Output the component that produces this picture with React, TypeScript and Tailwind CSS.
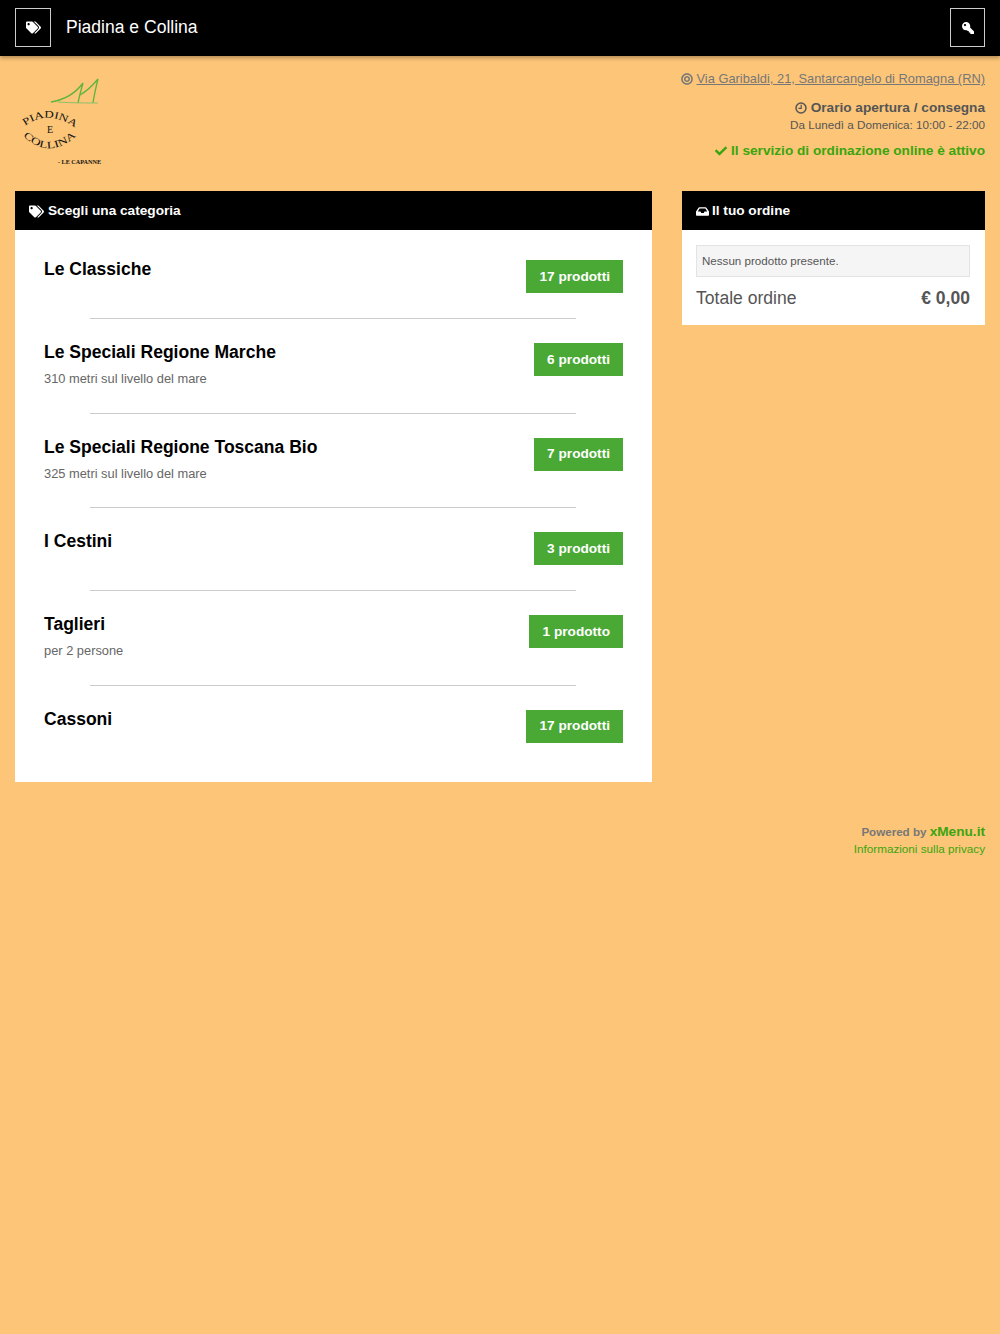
import { FaTags, FaKey, FaCheck, FaInbox, FaBullseye } from "react-icons/fa";

const categories = [
  { name: "Le Classiche", note: "", count: "17 prodotti" },
  { name: "Le Speciali Regione Marche", note: "310 metri sul livello del mare", count: "6 prodotti" },
  { name: "Le Speciali Regione Toscana Bio", note: "325 metri sul livello del mare", count: "7 prodotti" },
  { name: "I Cestini", note: "", count: "3 prodotti" },
  { name: "Taglieri", note: "per 2 persone", count: "1 prodotto" },
  { name: "Cassoni", note: "", count: "17 prodotti" },
];

function Logo() {
  return (
    <svg width="90" height="90" viewBox="0 0 90 90" className="block">
      <path d="M34 26 C46 24 58 18 66 7 C64 14 62 22 61 27" fill="none" stroke="#5db53c" strokeWidth="1.3" />
      <path d="M63 19 C70 15 76 9 81 3 C79 11 77 20 76 27" fill="none" stroke="#5db53c" strokeWidth="1.3" />
      <path d="M41 26 C55 27 70 27 81 27" fill="none" stroke="#8cc06c" strokeWidth="1" />
      <defs>
        <path id="arcTop" d="M8 50 Q31 33 57 51" />
        <path id="arcBottom" d="M6 60 Q31 84 58 61" />
      </defs>
      <text fontFamily="'Liberation Serif', serif" fontSize="10" fill="#111">
        <textPath href="#arcTop" textLength="54" lengthAdjust="spacingAndGlyphs">PIADINA</textPath>
      </text>
      <text x="30" y="57" fontFamily="'Liberation Serif', serif" fontSize="10" fill="#111">E</text>
      <text fontFamily="'Liberation Serif', serif" fontSize="10" fill="#111">
        <textPath href="#arcBottom" textLength="60" lengthAdjust="spacingAndGlyphs">COLLINA</textPath>
      </text>
      <text x="41" y="88" textLength="43" lengthAdjust="spacingAndGlyphs" fontFamily="'Liberation Serif', serif" fontSize="6" fontWeight="700" fill="#111">- LE CAPANNE</text>
    </svg>
  );
}

function ClockIcon() {
  return (
    <svg width="12" height="12" viewBox="0 0 12 12" fill="none" stroke="currentColor">
      <circle cx="6" cy="6" r="5" strokeWidth="1.5" />
      <path d="M6.2 2.8 V6.4 H3.4" strokeWidth="1.2" />
    </svg>
  );
}

export default function App() {
  return (
    <div className="min-h-[1334px] bg-[#fcc578] font-['Liberation_Sans',Arial,sans-serif] text-[#555]">
      {/* top bar */}
      <header className="flex h-14 items-start justify-between bg-black px-[15px] pt-2 shadow-[0_2px_4px_rgba(0,0,0,0.3)]">
        <div className="flex items-start">
          <button className="flex h-[39px] w-9 items-center justify-center border border-[#ccc] text-white">
            <FaTags size={15} />
          </button>
          <span className="ml-[15px] mt-[9px] text-[17.55px] leading-5 text-white">Piadina e Collina</span>
        </div>
        <button className="flex h-[39px] w-[35px] items-center justify-center border border-[#ccc] text-white">
          <FaKey size={12} className="-scale-x-100" />
        </button>
      </header>

      {/* logo and shop info */}
      <div className="flex justify-between px-[15px] pt-[13px]">
        <div className="-mt-px pl-[2px] pt-2">
          <Logo />
        </div>
        <div className="text-right">
          <p className="flex items-center justify-end gap-[3px] text-[12.87px] leading-5 text-[#777]">
            <FaBullseye size={12} />
            <a className="underline">Via Garibaldi, 21, Santarcangelo di Romagna (RN)</a>
          </p>
          <p className="mt-[9px] flex items-center justify-end gap-1 text-[13.65px] font-bold leading-5 text-[#555]">
            <ClockIcon />
            Orario apertura / consegna
          </p>
          <p className="text-[11.7px] leading-[14px] text-[#555]">Da Lunedì a Domenica: 10:00 - 22:00</p>
          <p className="mt-[9px] flex items-center justify-end gap-1 text-[13.65px] font-bold leading-5 text-[#3aa50f]">
            <FaCheck size={12} />
            Il servizio di ordinazione online è attivo
          </p>
        </div>
      </div>

      {/* main columns */}
      <div className="mt-[25px] flex items-start justify-between px-[15px]">
        <section className="w-[637px]">
          <h2 className="flex h-[39px] items-center gap-[4px] bg-black pl-[14px] pt-px text-[13.65px] font-bold text-white">
            <FaTags size={15} />
            Scegli una categoria
          </h2>
          <div className="bg-white px-[29px] pb-[14px] pt-[6px]">
            {categories.map((c, i) => (
              <div key={c.name}>
                <div className="flex items-start justify-between pb-[24.5px] pt-[23px]">
                  <div>
                    <h3 className="text-[17.55px] font-bold leading-5 text-black">{c.name}</h3>
                    {c.note ? <p className="mt-[8px] text-[12.85px] leading-[18px] text-[#666]">{c.note}</p> : <div className="h-[14.5px]" />}
                  </div>
                  <span className="mt-px flex h-[33px] items-center bg-[#4aa935] pl-[13.5px] pr-[13px] pt-px text-[13.65px] font-bold text-white">{c.count}</span>
                </div>
                {i < categories.length - 1 ? <hr className="ml-[46px] mr-[47px] border-t border-[#ccc]" /> : null}
              </div>
            ))}
          </div>
        </section>

        <aside className="w-[303px]">
          <h2 className="flex h-[39px] items-center gap-[3px] bg-black pl-[14px] pt-px text-[13.65px] font-bold text-white">
            <FaInbox size={13} />
            Il tuo ordine
          </h2>
          <div className="bg-white pb-[17px] pl-[14px] pr-[15px] pt-[15px]">
            <div className="flex h-8 items-center border border-[#e3e3e3] bg-[#f5f5f5] px-[5px] text-[11.6px] text-[#555]">Nessun prodotto presente.</div>
            <div className="mt-[11px] flex items-center justify-between text-[17.55px] leading-5">
              <span>Totale ordine</span>
              <span className="font-bold">€ 0,00</span>
            </div>
          </div>
        </aside>
      </div>

      {/* footer */}
      <div className="mt-[41px] px-[15px] text-right">
        <p className="text-[11.6px] font-bold leading-[18px] text-[#777]">
          Powered by <span className="text-[13.65px] text-[#3aa50f]">xMenu.it</span>
        </p>
        <p className="text-[11.7px] leading-[15px] text-[#3aa50f]">Informazioni sulla privacy</p>
      </div>
    </div>
  );
}
